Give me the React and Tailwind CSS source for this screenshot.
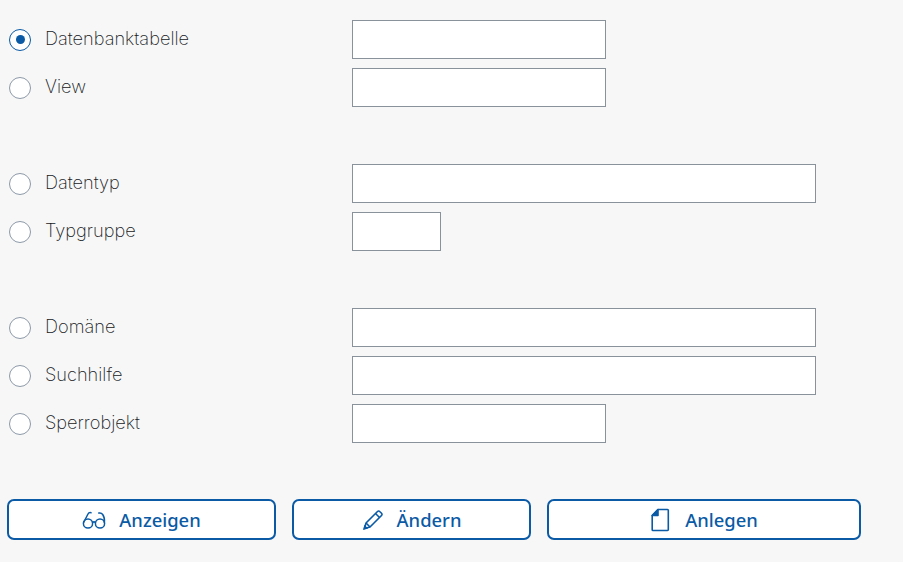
const rowGroups = [
  [
    { label: 'Datenbanktabelle', width: 'w-[254px]', checked: true },
    { label: 'View', width: 'w-[254px]' },
  ],
  [
    { label: 'Datentyp', width: 'w-[464px]' },
    { label: 'Typgruppe', width: 'w-[89px]' },
  ],
  [
    { label: 'Domäne', width: 'w-[464px]' },
    { label: 'Suchhilfe', width: 'w-[464px]' },
    { label: 'Sperrobjekt', width: 'w-[254px]' },
  ],
];

const GlassesIcon = () => (
  <svg width="24" height="20" viewBox="0 0 24 20" fill="none" stroke="#0a5aa5" strokeWidth="1.5" strokeLinecap="round">
    <circle cx="6" cy="13.5" r="4.6" />
    <circle cx="18" cy="13.5" r="4.6" />
    <path d="M10.6 12.5c.8-.7 2-.7 2.8 0" />
    <path d="M1.6 12.5 6 4c.6-1.2 1.8-1.6 3-1.3" />
    <path d="M22.4 12.5c.3-3-.3-6-1.7-8-.9-1.3-2.4-1.8-3.9-1.5" />
  </svg>
);

const PencilIcon = () => (
  <svg width="22" height="22" viewBox="0 0 22 22" fill="none" stroke="#0a5aa5" strokeWidth="1.6" strokeLinejoin="round">
    <path d="M2.5 19.5 4 14 15.5 2.5c.7-.7 1.6-.7 2.2 0l1.8 1.8c.7.7.7 1.5 0 2.2L8 18z" />
    <path d="M13.5 4.5l4 4" />
    <path d="M4 14l4 4" />
    <path d="M1 21l1.4-5.2 3.8 3.8z" fill="#0a5aa5" stroke="none" />
  </svg>
);

const DocumentIcon = () => (
  <svg width="20" height="24" viewBox="0 0 20 24" fill="none" stroke="#0a5aa5" strokeWidth="1.6" strokeLinejoin="round">
    <path d="M8 1.5h9.5a.8.8 0 0 1 .8.8v19.4a.8.8 0 0 1-.8.8H3a.8.8 0 0 1-.8-.8V7.5z" />
    <path d="M8 1.5 2.2 7.5H8z" fill="#0a5aa5" />
  </svg>
);

const Row = ({ label, width, checked }) => (
  <div className="flex items-center h-[39px]">
    <div className={`ml-[9px] w-[22px] h-[22px] rounded-full bg-white flex items-center justify-center shrink-0 ${checked ? 'border-[1.5px] border-[#0a5aa5]' : 'border border-[#8d99a8]'}`}>
      {checked && <div className="w-[9px] h-[9px] rounded-full bg-[#0a5aa5]" />}
    </div>
    <span className="ml-[14px] w-[307px] text-[18.2px] font-extralight font-['Inter',sans-serif] text-[#16191c] -translate-y-px">{label}</span>
    <div className={`${width} h-[39px] bg-white border border-[#89919a]`} />
  </div>
);

const ActionButton = ({ width, icon, gap, children }) => (
  <button className={`${width} h-[41px] flex items-center justify-center ${gap} bg-white border-2 border-[#0a5aa5] rounded-[7px] text-[18.4px] font-medium text-[#0a5aa5]`}>
    {icon}
    <span>{children}</span>
  </button>
);

export default function App() {
  return (
    <div className="w-[903px] h-[562px] overflow-hidden bg-[#f7f7f7] pt-[20px] font-['Noto_Sans',sans-serif] flex flex-col gap-[57px]">
      {rowGroups.map((group) => (
        <div key={group[0].label} className="flex flex-col gap-[9px]">
          {group.map((row) => (
            <Row key={row.label} {...row} />
          ))}
        </div>
      ))}
      <div className="flex gap-[16px] ml-[7px] -mt-px">
        <ActionButton width="w-[269px]" gap="gap-[13px]" icon={<GlassesIcon />}>Anzeigen</ActionButton>
        <ActionButton width="w-[239px]" gap="gap-[13px]" icon={<PencilIcon />}>Ändern</ActionButton>
        <ActionButton width="w-[314px]" gap="gap-[15px]" icon={<DocumentIcon />}>Anlegen</ActionButton>
      </div>
    </div>
  );
}
